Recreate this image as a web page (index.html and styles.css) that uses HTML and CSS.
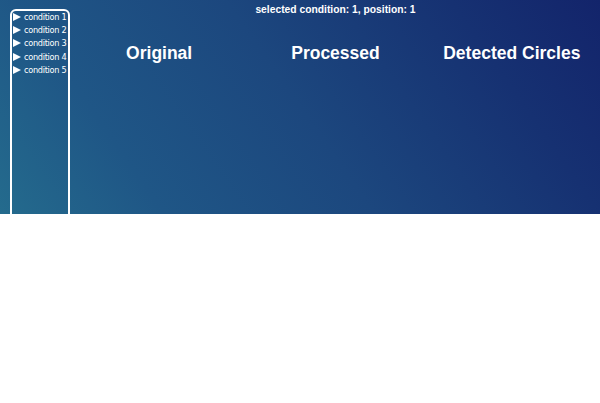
FILE: index.html
```html
<!DOCTYPE html>
<html>
<head>
<meta charset="utf-8">
<link rel="stylesheet" href="styles.css">
</head>
<body>
<div class="stage">
  <aside class="sidebar">
    <ul class="conditions">
      <li>condition 1</li>
      <li>condition 2</li>
      <li>condition 3</li>
      <li>condition 4</li>
      <li>condition 5</li>
    </ul>
  </aside>
  <main class="content">
    <div class="status">selected condition: 1, position: 1</div>
    <div class="columns">
      <h2 class="col-title">Original</h2>
      <h2 class="col-title">Processed</h2>
      <h2 class="col-title">Detected Circles</h2>
    </div>
  </main>
</div>
</body>
</html>
```
FILE: styles.css
```css
html, body {
  margin: 0;
  padding: 0;
  background: #ffffff;
}
body {
  font-family: "Liberation Sans", Arial, sans-serif;
  color: #ffffff;
}
.stage {
  height: 214px;
  overflow: hidden;
  display: flex;
  background: linear-gradient(55deg, #246b8d 0%, #1f5686 22%, #1c477e 50%, #163172 80%, #13246b 100%);
}
.sidebar {
  width: 56px;
  margin: 9px 0 0 10px;
  height: 240px;
  border: 2px solid #ffffff;
  border-radius: 6px;
  flex: none;
}
.conditions {
  list-style: none;
  margin: 0;
  padding: 0 0 0 1px;
}
.conditions li {
  font-family: "DejaVu Sans", Verdana, sans-serif;
  font-size: 8.2px;
  letter-spacing: -0.3px;
  line-height: 13.2px;
  white-space: nowrap;
}
.conditions li::before {
  content: "";
  display: inline-block;
  width: 0;
  height: 0;
  border-left: 8px solid #ffffff;
  border-top: 4px solid transparent;
  border-bottom: 4px solid transparent;
  margin-right: 3px;
  vertical-align: -1px;
}
.content {
  flex: 1;
  display: flex;
  flex-direction: column;
  margin-left: 1px;
}
.status {
  text-align: center;
  font-weight: bold;
  font-size: 10.3px;
  margin-top: 3px;
  line-height: 13px;
}
.columns {
  display: grid;
  grid-template-columns: repeat(3, 1fr);
  margin-top: 26px;
}
.col-title {
  margin: 0;
  text-align: center;
  font-size: 17.5px;
  line-height: 22px;
  font-weight: bold;
}
```
